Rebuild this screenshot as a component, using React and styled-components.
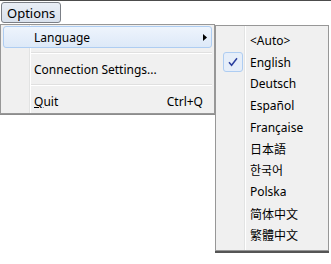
import styled, { createGlobalStyle } from "styled-components";

const GlobalStyle = createGlobalStyle`
  html, body {
    margin: 0;
    padding: 0;
    background: #ffffff;
  }
  body {
    font-family: "Noto Sans", "Noto Sans CJK SC", sans-serif;
    font-size: 12px;
    color: #000;
  }
`;

const languages = [
  "<Auto>",
  "English",
  "Deutsch",
  "Español",
  "Française",
  "日本語",
  "한국어",
  "Polska",
  "简体中文",
  "繁體中文",
];

export default function App() {
  return (
    <>
      <GlobalStyle />
      <Page>
        <MenuBar>
          <BarButton>Options</BarButton>
        </MenuBar>
        <Popups>
          <Menu>
            <MenuItem $active>
              <IconCell />
              <Label>Language</Label>
              <Arrow width="4" height="7" viewBox="0 0 4 7">
                <path d="M0 0 L4 3.5 L0 7 Z" fill="#000" />
              </Arrow>
            </MenuItem>
            <Separator />
            <MenuItem>
              <IconCell />
              <Label>Connection Settings...</Label>
            </MenuItem>
            <Separator />
            <MenuItem>
              <IconCell />
              <Label>
                <u>Q</u>uit
              </Label>
              <Shortcut>Ctrl+Q</Shortcut>
            </MenuItem>
          </Menu>
          <SubMenu>
            {languages.map((lang) => (
              <SubItem key={lang}>
                <IconCell>
                  {lang === "English" && (
                    <CheckBox>
                      <svg width="10" height="10" viewBox="0 0 10 10">
                        <path
                          d="M1 5.2 L3.6 8.2 L9 1.2"
                          fill="none"
                          stroke="#2b3f9e"
                          strokeWidth="1.5"
                        />
                      </svg>
                    </CheckBox>
                  )}
                </IconCell>
                <Label $indent={2}>{lang}</Label>
              </SubItem>
            ))}
          </SubMenu>
        </Popups>
      </Page>
    </>
  );
}

const Page = styled.div`
  width: 331px;
  height: 264px;
  overflow: hidden;
  border-top: 1px solid #4c4c4c;
  box-sizing: border-box;
`;

const MenuBar = styled.div`
  height: 23px;
  display: flex;
  align-items: center;
  padding-left: 1px;
`;

const BarButton = styled.div`
  height: 19px;
  padding: 0 5px;
  display: flex;
  align-items: center;
  border: 1px solid #7b7f86;
  border-radius: 3px;
  background: linear-gradient(#e9eef6, #d9e1ec);
  font-size: 13px;
`;

const Popups = styled.div`
  display: flex;
  align-items: flex-start;
`;

const columnLine = `
  background: linear-gradient(
    to right,
    #f0f0f0 28px,
    #e2e3e3 28px 29px,
    #ffffff 29px 30px,
    #f0f0f0 30px
  );
`;

const Menu = styled.div`
  width: 215px;
  box-sizing: border-box;
  border: 1px solid #979797;
  padding: 1px 2px 1px 2px;
  ${columnLine}
  box-shadow: 0 1px 0 #8c8c8c;
`;

const MenuItem = styled.div`
  height: 22px;
  box-sizing: border-box;
  display: flex;
  align-items: center;
  border: 1px solid ${(p) => (p.$active ? "#aecdf2" : "transparent")};
  border-radius: 3px;
  background: ${(p) =>
    p.$active ? "linear-gradient(#eef4fc, #dde9f8)" : "transparent"};
`;

const IconCell = styled.div`
  width: 30px;
  flex: none;
  display: flex;
  align-items: center;
  justify-content: center;
`;

const Label = styled.span`
  flex: 1;
  white-space: nowrap;
  padding-left: ${(p) => p.$indent || 0}px;
`;

const Shortcut = styled.span`
  padding-right: 8px;
`;

const Arrow = styled.svg`
  margin-right: 4px;
`;

const Separator = styled.div`
  height: 2px;
  margin: 4px 0 4px 28px;
  background: linear-gradient(#e0e0e0 1px, #ffffff 1px);
`;

const SubMenu = styled.div`
  margin-top: 1px;
  width: 114px;
  box-sizing: border-box;
  border: 1px solid #979797;
  padding: 4px 2px;
  ${columnLine}
  box-shadow: 0 2px 0 #555;
`;

const SubItem = styled.div`
  height: 21.6px;
  display: flex;
  align-items: center;
`;

const CheckBox = styled.div`
  width: 20px;
  height: 20px;
  box-sizing: border-box;
  border: 1px solid #aecdf2;
  border-radius: 3px;
  background: #e6eef9;
  display: flex;
  align-items: center;
  justify-content: center;
`;
